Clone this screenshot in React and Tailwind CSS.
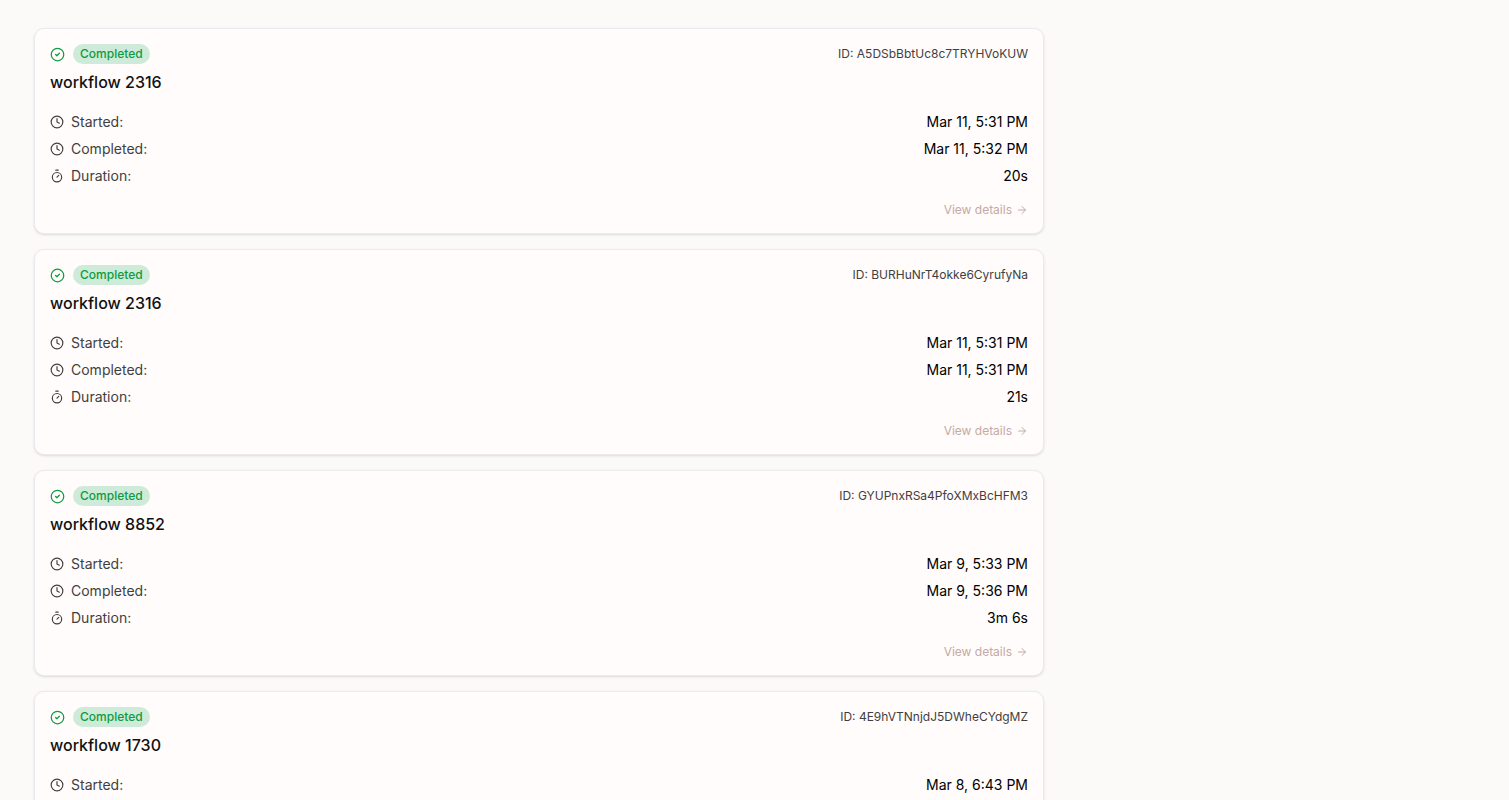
import React from 'react';
import { ArrowRight, CircleCheck, Clock, Timer } from 'lucide-react';

const executions = [
  {
    id: 'A5DSbBbtUc8c7TRYHVoKUW',
    name: 'workflow 2316',
    status: 'Completed',
    started: 'Mar 11, 5:31 PM',
    completed: 'Mar 11, 5:32 PM',
    duration: '20s',
  },
  {
    id: 'BURHuNrT4okke6CyrufyNa',
    name: 'workflow 2316',
    status: 'Completed',
    started: 'Mar 11, 5:31 PM',
    completed: 'Mar 11, 5:31 PM',
    duration: '21s',
  },
  {
    id: 'GYUPnxRSa4PfoXMxBcHFM3',
    name: 'workflow 8852',
    status: 'Completed',
    started: 'Mar 9, 5:33 PM',
    completed: 'Mar 9, 5:36 PM',
    duration: '3m 6s',
  },
  {
    id: '4E9hVTNnjdJ5DWheCYdgMZ',
    name: 'workflow 1730',
    status: 'Completed',
    started: 'Mar 8, 6:43 PM',
  },
];

const DetailRow = ({ icon: Icon, label, value }) => (
  <div className="flex items-center justify-between h-5">
    <dt className="flex items-center gap-[7px] text-[#3f3f3f]">
      <Icon className="size-[14px]" strokeWidth={2} />
      {label}
    </dt>
    <dd className="text-black">{value}</dd>
  </div>
);

const ExecutionCard = ({ execution }) => (
  <li className="rounded-[10px] border border-[#ebebef] bg-[#fffcfb] px-[15px] pt-[15px] pb-[13px] shadow-sm">
    <div className="flex items-center justify-between h-5">
      <div className="flex items-center gap-2">
        <CircleCheck className="size-[15px] text-[#109a41]" strokeWidth={2} />
        <span className="rounded-full bg-[#cdebd8] px-[7px] text-xs leading-5 font-medium text-[#109a41]">
          {execution.status}
        </span>
      </div>
      <span className="text-xs text-[#3f3f3f]">ID: {execution.id}</span>
    </div>

    <h3 className="mt-1 text-base leading-7 font-medium text-[#111111]">
      {execution.name}
    </h3>

    <dl className="mt-4 flex flex-col gap-[7px] text-sm">
      <DetailRow icon={Clock} label="Started:" value={execution.started} />
      {execution.completed && (
        <>
          <DetailRow icon={Clock} label="Completed:" value={execution.completed} />
          <DetailRow icon={Timer} label="Duration:" value={execution.duration} />
        </>
      )}
    </dl>

    <div className="mt-[14px] flex justify-end">
      <a
        href="#"
        className="flex items-center gap-1 text-xs leading-5 text-[#c4aaa4]"
      >
        View details
        <ArrowRight className="size-3" />
      </a>
    </div>
  </li>
);

const App = () => {
  return (
    <main className="min-h-screen bg-[#fbfaf8] px-[34px] py-7 font-['Inter',sans-serif]">
      <ul className="flex w-full max-w-[1010px] flex-col gap-[15px]">
        {executions.map((execution) => (
          <ExecutionCard key={execution.id} execution={execution} />
        ))}
      </ul>
    </main>
  );
};

export default App;
